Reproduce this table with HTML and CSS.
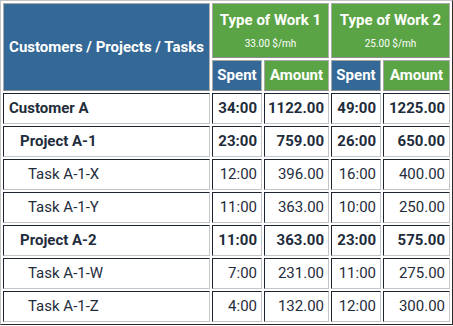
FILE: index.html
```html
<!DOCTYPE html>
<html>
<head>
<meta charset="utf-8">
<link rel="stylesheet" href="styles.css">
</head>
<body>
<table class="report">
  <colgroup>
    <col class="col-name">
    <col class="col-spent">
    <col class="col-amt">
    <col class="col-spent">
    <col class="col-amt2">
  </colgroup>
  <thead>
    <tr>
      <th class="hd hd-blue hd-name" rowspan="2">Customers / Projects / Tasks</th>
      <th class="hd hd-green hd-group" colspan="2"><div class="grp-title">Type of Work 1</div><div class="grp-rate">33.00 $/mh</div></th>
      <th class="hd hd-green hd-group" colspan="2"><div class="grp-title">Type of Work 2</div><div class="grp-rate">25.00 $/mh</div></th>
    </tr>
    <tr>
      <th class="hd hd-blue hd-sub">Spent</th>
      <th class="hd hd-green hd-sub">Amount</th>
      <th class="hd hd-blue hd-sub">Spent</th>
      <th class="hd hd-green hd-sub">Amount</th>
    </tr>
  </thead>
  <tbody>
    <tr class="lvl-cust">
      <td class="name">Customer A</td><td class="num">34:00</td><td class="num">1122.00</td><td class="num">49:00</td><td class="num">1225.00</td>
    </tr>
    <tr class="lvl-proj">
      <td class="name">Project A-1</td><td class="num">23:00</td><td class="num">759.00</td><td class="num">26:00</td><td class="num">650.00</td>
    </tr>
    <tr class="lvl-task">
      <td class="name">Task A-1-X</td><td class="num">12:00</td><td class="num">396.00</td><td class="num">16:00</td><td class="num">400.00</td>
    </tr>
    <tr class="lvl-task">
      <td class="name">Task A-1-Y</td><td class="num">11:00</td><td class="num">363.00</td><td class="num">10:00</td><td class="num">250.00</td>
    </tr>
    <tr class="lvl-proj">
      <td class="name">Project A-2</td><td class="num">11:00</td><td class="num">363.00</td><td class="num">23:00</td><td class="num">575.00</td>
    </tr>
    <tr class="lvl-task">
      <td class="name">Task A-1-W</td><td class="num">7:00</td><td class="num">231.00</td><td class="num">11:00</td><td class="num">275.00</td>
    </tr>
    <tr class="lvl-task">
      <td class="name">Task A-1-Z</td><td class="num">4:00</td><td class="num">132.00</td><td class="num">12:00</td><td class="num">300.00</td>
    </tr>
  </tbody>
</table>
</body>
</html>
```

FILE: styles.css
```css
html, body {
  margin: 0;
  padding: 0;
  background: #ffffff;
}
body {
  font-family: Roboto, "Liberation Sans", sans-serif;
  color: #1f2c3b;
}
.report {
  border-collapse: separate;
  border-spacing: 2px;
  border: 1px solid;
  border-color: #c4c4c4 #2a2a2a #2a2a2a #c4c4c4;
  width: 453px;
  table-layout: fixed;
}
.col-name { width: 207px; }
.col-spent { width: 50px; }
.col-amt { width: 65px; }
.col-amt2 { width: 67px; }
.hd {
  border: 1px solid;
  border-color: #a9a9a9 #b4b4b4 #8c8c8c #a9a9a9;
  color: #ffffff;
  font-weight: 700;
  font-size: 15px;
  padding: 0;
  text-align: center;
  white-space: nowrap;
}
.hd-blue { background: #346896; }
.hd-green { background: #5ba445; }
.hd-group {
  height: 53px;
  vertical-align: top;
}
.grp-title {
  font-size: 15px;
  line-height: 16px;
  padding-top: 8px;
}
.grp-rate {
  font-size: 10px;
  font-weight: 400;
  line-height: 12px;
  padding-top: 10px;
}
.hd-sub {
  height: 29px;
  line-height: 29px;
}
td {
  border: 1px solid;
  border-color: #1b2430 #c2c6ca #c2c6ca #1b2430;
  height: 29px;
  padding: 0;
  font-size: 15px;
  line-height: 29px;
  white-space: nowrap;
}
.num {
  text-align: right;
  padding-right: 4px;
}
.name { padding-left: 5px; }
.lvl-cust td, .lvl-proj td { font-weight: 700; }
.lvl-proj .name { padding-left: 16px; }
.lvl-task .name { padding-left: 24px; }
```
